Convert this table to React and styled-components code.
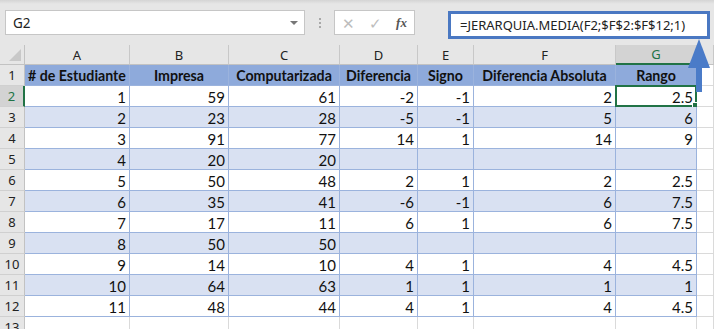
import React from 'react';
import styled, { createGlobalStyle } from 'styled-components';

const GlobalStyle = createGlobalStyle`
  html, body {
    margin: 0;
    padding: 0;
    background: #e6e6e6;
    overflow: hidden;
  }
`;

const COLS = '25px 105px 99px 111px 78px 56px 142px 81px 1fr';

const Window = styled.div`
  position: relative;
  width: 714px;
  height: 329px;
  background: #e6e6e6;
  overflow: hidden;
  font-family: 'Lato', 'Liberation Sans', sans-serif;
`;

const Toolbar = styled.div`
  display: flex;
  align-items: flex-start;
  height: 45px;
  padding-top: 10px;
  box-sizing: border-box;
  background: linear-gradient(#d4d4d4 0px, #e6e6e6 4px);
  font-family: 'Noto Sans', 'Open Sans', sans-serif;
`;

const NameBox = styled.div`
  display: flex;
  align-items: center;
  justify-content: space-between;
  margin-left: 5px;
  width: 300px;
  height: 25px;
  box-sizing: border-box;
  padding: 0 6px 0 7px;
  background: #fff;
  border: 1px solid #c6c6c6;
  font-size: 13.5px;
  color: #222;
`;

const DropArrow = styled.span`
  width: 0;
  height: 0;
  border-left: 4px solid transparent;
  border-right: 4px solid transparent;
  border-top: 4px solid #777;
`;

const Dots = styled.div`
  display: flex;
  flex-direction: column;
  gap: 2px;
  margin: 8px 13px 0 14px;
  span {
    width: 2px;
    height: 2px;
    background: #a8a8a8;
  }
`;

const ActionBox = styled.div`
  display: flex;
  align-items: center;
  justify-content: space-around;
  width: 81px;
  height: 25px;
  box-sizing: border-box;
  background: #fff;
  border: 1px solid #c6c6c6;
  color: #bdbdbd;
  font-size: 15px;
`;

const Fx = styled.span`
  font-family: 'Liberation Serif', serif;
  font-style: italic;
  font-size: 13px;
  color: #555;
  font-weight: bold;
`;

const FormulaBox = styled.div`
  display: flex;
  align-items: center;
  margin-left: 33px;
  margin-top: 1px;
  width: 262px;
  height: 28px;
  box-sizing: border-box;
  padding-left: 9px;
  background: #fff;
  border: 3px solid #4a78c2;
  font-size: 13px;
  color: #222;
  white-space: nowrap;
`;

const Sheet = styled.div`
  display: grid;
  grid-template-columns: ${COLS};
  grid-auto-rows: 21px;
  grid-template-rows: 20px;
  background: #fff;
`;

const Corner = styled.div`
  position: relative;
  background: #e6e6e6;
  border-right: 1px solid #c2c2c2;
  border-bottom: 1px solid #c2c2c2;
  &::after {
    content: '';
    position: absolute;
    right: 3px;
    bottom: 3px;
    width: 0;
    height: 0;
    border-left: 12px solid transparent;
    border-bottom: 12px solid #c8c8c8;
  }
`;

const ColHeader = styled.div`
  display: flex;
  align-items: center;
  justify-content: center;
  background: ${p => (p.$active ? '#d3d3d3' : '#e6e6e6')};
  border-right: 1px solid #c8c8c8;
  border-bottom: ${p => (p.$active ? '2px solid #217346' : '1px solid #c2c2c2')};
  color: ${p => (p.$active ? '#217346' : '#222')};
  font-family: 'Noto Sans', 'Open Sans', sans-serif;
  font-size: 13px;
  box-sizing: border-box;
`;

const RowHeader = styled.div`
  display: flex;
  align-items: center;
  justify-content: center;
  background: ${p => (p.$active ? '#d3d3d3' : '#e6e6e6')};
  border-right: ${p => (p.$active ? '2px solid #217346' : '1px solid #c2c2c2')};
  border-bottom: 1px solid #d0d0d0;
  color: ${p => (p.$active ? '#217346' : '#222')};
  font-family: 'Noto Sans', 'Open Sans', sans-serif;
  font-size: 13px;
  box-sizing: border-box;
`;

const Cell = styled.div`
  position: relative;
  display: flex;
  align-items: center;
  justify-content: ${p => p.$align || 'flex-end'};
  padding: 1px 3px 0 3px;
  box-sizing: border-box;
  background: ${p => (p.$head ? '#8eaadb' : p.$band ? '#d9e1f2' : '#fff')};
  border-right: 1px solid ${p => (p.$plain ? '#dadada' : '#9bb3dd')};
  border-bottom: 1px solid ${p => (p.$plain ? '#dadada' : '#9bb3dd')};
  font-size: ${p => (p.$head ? '14.2px' : '15px')};
  font-weight: ${p => (p.$head ? 700 : 400)};
  color: #111;
  white-space: nowrap;
  overflow: visible;
`;

const Selection = styled.div`
  position: absolute;
  left: -1px;
  top: -1px;
  right: -1px;
  bottom: -1px;
  border: 2px solid #217346;
  pointer-events: none;
`;

const Handle = styled.div`
  position: absolute;
  right: -4px;
  bottom: -4px;
  width: 5px;
  height: 5px;
  background: #217346;
  border: 1px solid #fff;
`;

const Arrow = styled.svg`
  position: absolute;
  left: 688px;
  top: 39px;
`;

const headers = [
  ['# de Estudiante', 'flex-start'],
  ['Impresa', 'center'],
  ['Computarizada', 'center'],
  ['Diferencia', 'center'],
  ['Signo', 'center'],
  ['Diferencia Absoluta', 'center'],
  ['Rango', 'center'],
];

const data = [
  [1, 59, 61, -2, -1, 2, 2.5],
  [2, 23, 28, -5, -1, 5, 6],
  [3, 91, 77, 14, 1, 14, 9],
  [4, 20, 20, '', '', '', ''],
  [5, 50, 48, 2, 1, 2, 2.5],
  [6, 35, 41, -6, -1, 6, 7.5],
  [7, 17, 11, 6, 1, 6, 7.5],
  [8, 50, 50, '', '', '', ''],
  [9, 14, 10, 4, 1, 4, 4.5],
  [10, 64, 63, 1, 1, 1, 1],
  [11, 48, 44, 4, 1, 4, 4.5],
];

const letters = ['A', 'B', 'C', 'D', 'E', 'F', 'G', ''];

export default function App() {
  return (
    <Window>
      <GlobalStyle />
      <Toolbar>
        <NameBox>
          G2
          <DropArrow />
        </NameBox>
        <Dots>
          <span />
          <span />
          <span />
        </Dots>
        <ActionBox>
          <span>✕</span>
          <span>✓</span>
          <Fx>fx</Fx>
        </ActionBox>
        <FormulaBox>=JERARQUIA.MEDIA(F2;$F$2:$F$12;1)</FormulaBox>
      </Toolbar>

      <Sheet>
        <Corner />
        {letters.map((l, i) => (
          <ColHeader key={i} $active={l === 'G'}>{l}</ColHeader>
        ))}

        <RowHeader>1</RowHeader>
        {headers.map(([t, a]) => (
          <Cell key={t} $head $align={a}>{t}</Cell>
        ))}
        <Cell $plain />

        {data.map((row, r) => (
          <React.Fragment key={r}>
            <RowHeader $active={r === 0}>{r + 2}</RowHeader>
            {row.map((v, c) => (
              <Cell key={c} $band={r % 2 === 1}>
                {v}
                {r === 0 && c === 6 && (
                  <Selection>
                    <Handle />
                  </Selection>
                )}
              </Cell>
            ))}
            <Cell $plain />
          </React.Fragment>
        ))}

        <RowHeader>13</RowHeader>
        {letters.map((_, i) => (
          <Cell key={i} $plain />
        ))}
      </Sheet>

      <Arrow width="22" height="54" viewBox="0 0 22 54">
        <polygon points="11,0 22,29 0,29" fill="#4a7bc8" />
        <rect x="8" y="28" width="6" height="25" fill="#4a7bc8" />
      </Arrow>
    </Window>
  );
}
